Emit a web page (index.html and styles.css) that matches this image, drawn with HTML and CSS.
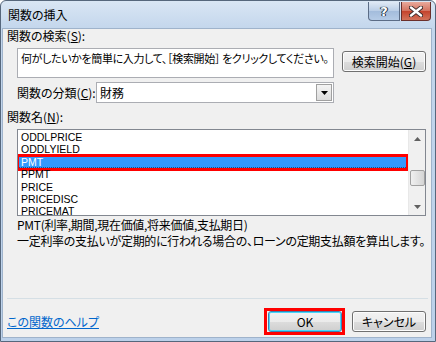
FILE: index.html
```html
<!DOCTYPE html>
<html>

<head>
    <title>関数の挿入</title>
    <meta charset="UTF-8" />
    <link rel="stylesheet" href="styles.css">
</head>

<body>
    <div class="window">
        <header class="titlebar">
            <span class="titlebar__text">関数の挿入</span>
            <div class="titlebar__buttons">
                <button class="titlebar__help">?</button>
                <button class="titlebar__close">
                    <svg width="14" height="11" viewBox="0 0 14 11">
                        <path d="M2 1.5 L12 9.5 M12 1.5 L2 9.5" stroke="#3a2a2a" stroke-width="4.2" stroke-linecap="round" />
                        <path d="M2 1.5 L12 9.5 M12 1.5 L2 9.5" stroke="#ffffff" stroke-width="2.4" stroke-linecap="round" />
                    </svg>
                </button>
            </div>
        </header>

        <div class="dialog">
            <div class="dialog__label">関数の検索(<u>S</u>):</div>
            <div class="search">
                <div class="search__box">何がしたいかを簡単に入力して、［検索開始］ をクリックしてください。</div>
                <button class="btn search__btn">検索開始(<u>G</u>)</button>
            </div>

            <div class="category">
                <span class="category__label">関数の分類(<u>C</u>):</span>
                <div class="category__select">
                    <span>財務</span>
                    <span class="category__arrow">
                        <svg width="7" height="4" viewBox="0 0 7 4"><path d="M0 0 H7 L3.5 4 Z" fill="#000" /></svg>
                    </span>
                </div>
            </div>

            <div class="dialog__label dialog__label--names">関数名(<u>N</u>):</div>
            <div class="names">
                <div class="names__list">
                    <span class="names__item">ODDLPRICE</span>
                    <span class="names__item">ODDLYIELD</span>
                    <span class="names__item selected">PMT</span>
                    <span class="names__item">PPMT</span>
                    <span class="names__item">PRICE</span>
                    <span class="names__item">PRICEDISC</span>
                    <span class="names__item">PRICEMAT</span>
                </div>
                <div class="scrollbar">
                    <span class="scrollbar__arrow">
                        <svg width="7" height="4" viewBox="0 0 7 4"><path d="M0 4 H7 L3.5 0 Z" fill="#606060" /></svg>
                    </span>
                    <span class="scrollbar__thumb"></span>
                    <span class="scrollbar__arrow">
                        <svg width="7" height="4" viewBox="0 0 7 4"><path d="M0 0 H7 L3.5 4 Z" fill="#606060" /></svg>
                    </span>
                </div>
            </div>

            <div class="desc">
                <div>PMT(利率,期間,現在価値,将来価値,支払期日)</div>
                <div>一定利率の支払いが定期的に行われる場合の、ローンの定期支払額を算出します。</div>
            </div>

            <hr class="separator">

            <footer class="footer">
                <a class="footer__help" href="#">この関数のヘルプ</a>
                <div class="footer__buttons">
                    <button class="btn btn--default marked">OK</button>
                    <button class="btn">キャンセル</button>
                </div>
            </footer>
        </div>
    </div>
</body>

</html>
```

FILE: styles.css
```css
:root {
    --frame: #c2d5ec;
    --face: #f0f0f0;
    --border: #828790;
    --select: #3399ff;
    --mark: #ff0000;
}

* {
    box-sizing: border-box;
}

body {
    margin: 0;
    width: 436px;
    height: 342px;
    overflow: hidden;
    font-family: "Noto Sans CJK JP", sans-serif;
    font-feature-settings: "palt";
    font-size: 12px;
    color: #000;
    background: #fff;
}

button {
    font-family: inherit;
    font-feature-settings: inherit;
    font-size: 12px;
    padding: 0;
    margin: 0;
    color: #000;
}

u {
    text-decoration: underline;
    text-underline-offset: 1px;
}

/* Window frame - START */
.window {
    width: 436px;
    height: 342px;
    display: flex;
    flex-direction: column;
    border: 1px solid #56677c;
    border-radius: 6px 6px 0 0;
    background: linear-gradient(#d9e6f4 0, #c3d6ec 28px, #bcd1ea 100%);
}

.titlebar {
    height: 27px;
    flex-shrink: 0;
    display: flex;
    justify-content: space-between;
    align-items: flex-start;
    padding: 0 4px 0 7px;
}

.titlebar__text {
    margin-top: 6px;
    line-height: 16px;
    font-size: 12px;
}

.titlebar__buttons {
    display: flex;
    gap: 1px;
    margin-top: 1px;
}

.titlebar__help,
.titlebar__close {
    height: 19px;
    border: 1px solid #5b6c86;
    border-top: none;
    display: flex;
    align-items: center;
    justify-content: center;
}

.titlebar__help {
    width: 32px;
    border-radius: 0 0 0 4px;
    background: linear-gradient(#dfe9f5 0, #b9cde6 50%, #a3bcdc 51%, #b5cbe6 100%);
    color: #fff;
    font-family: "DejaVu Sans", sans-serif;
    font-weight: bold;
    font-size: 13px;
    line-height: 1;
    text-shadow: 0 0 1px #203040, 0 0 1px #203040, 1px 0 0 #203040, -1px 0 0 #203040;
}

.titlebar__close {
    width: 30px;
    border-color: #6b2f2b;
    border-radius: 0 0 4px 0;
    background: linear-gradient(#e9a99b 0, #d3725f 50%, #c4422c 51%, #d2735b 100%);
}
/* Window frame - END */

/* Dialog body - START */
.dialog {
    flex: 1;
    display: flex;
    flex-direction: column;
    margin: 0 3px 3px 1px;
    padding: 0 5px 0 4px;
    background: var(--face);
    border: 1px solid #9fb3cb;
}

.dialog__label {
    line-height: 14px;
}

.dialog__label--names {
    margin-top: 7px;
}

.search {
    display: flex;
    margin-top: 5px;
    height: 30px;
}

.search__box {
    width: 317px;
    height: 30px;
    margin-left: 10px;
    border: 1px solid #abadb3;
    background: #fff;
    padding: 2px 3px;
    font-size: 11px;
    line-height: 14px;
    letter-spacing: -0.35px;
    white-space: nowrap;
    overflow: hidden;
}

.btn {
    width: 74px;
    height: 21px;
    border: 1px solid #707070;
    border-radius: 3px;
    background: linear-gradient(#f2f2f2 0, #ebebeb 50%, #dddddd 51%, #cfcfcf 100%);
    box-shadow: inset 0 0 0 1px #fcfcfc;
    line-height: 18px;
}

.search__btn {
    width: 84px;
    margin: 3px 0 0 auto;
}

.category {
    display: flex;
    align-items: center;
    margin-top: 4px;
    padding-left: 10px;
    height: 21px;
}

.category__label {
    width: 79px;
}

.category__select {
    width: 238px;
    height: 21px;
    border: 1px solid #abadb3;
    background: #fff;
    display: flex;
    justify-content: space-between;
    align-items: center;
    padding: 0 1px 0 3px;
}

.category__arrow {
    width: 16px;
    height: 17px;
    border: 1px solid #a0a0a0;
    background: linear-gradient(#f4f4f4, #dcdcdc);
    display: flex;
    align-items: center;
    justify-content: center;
}

.names {
    display: flex;
    margin: 5px 0 0 10px;
    height: 87px;
    border: 1px solid var(--border);
    background: #fff;
}

.names__list {
    flex: 1;
    display: flex;
    flex-direction: column;
    padding-top: 1px;
    overflow: hidden;
    font-family: "Liberation Sans", sans-serif;
    font-size: 10.5px;
}

.names__item {
    position: relative;
    flex-shrink: 0;
    height: 12.4px;
    line-height: 12.4px;
    padding-left: 3px;
}

.names__item.selected {
    background: var(--select);
    color: #fff;
    outline: 1px dotted #1d4f85;
    outline-offset: -1px;
}

.scrollbar {
    width: 17px;
    display: flex;
    flex-direction: column;
    align-items: center;
    background: #f0f0f0;
    border-left: 1px solid #e8e8e8;
}

.scrollbar__arrow {
    height: 17px;
    display: flex;
    align-items: center;
    justify-content: center;
}

.scrollbar__arrow:last-child {
    margin-top: auto;
}

.scrollbar__thumb {
    width: 15px;
    height: 16px;
    margin-top: 23px;
    border: 1px solid #a0a0a0;
    border-radius: 2px;
    background: linear-gradient(90deg, #f0f0f0, #e0e0e0 60%, #d4d4d4);
}

.desc {
    margin: 1px 0 0 10px;
    line-height: 16px;
    letter-spacing: -0.3px;
    white-space: nowrap;
}

.separator {
    margin: auto -2px 0 0;
    border: none;
    border-top: 1px solid #d5dfe5;
    height: 0;
}

.footer {
    display: flex;
    justify-content: space-between;
    align-items: center;
    margin-top: 12px;
    margin-bottom: 5px;
}

.footer__help {
    color: #0066cc;
    text-decoration: underline;
    text-underline-offset: 1px;
}

.footer__buttons {
    display: flex;
    gap: 10px;
}

.btn--default {
    border-color: #3c7fb1;
    box-shadow: inset 0 0 0 1px #48d7fb;
}
/* Dialog body - END */

/* Red annotation boxes - START */
.marked,
.names__item.selected::after {
    position: relative;
}

.marked::after,
.names__item.selected::after {
    content: "";
    position: absolute;
    border: 3px solid var(--mark);
    pointer-events: none;
}

.marked::after {
    top: -4px;
    left: -5px;
    right: -4px;
    bottom: -4px;
}

.names__item.selected::after {
    top: -2px;
    left: -2px;
    right: -1px;
    bottom: -3px;
    border-radius: 1px;
}
/* Red annotation boxes - END */
```
